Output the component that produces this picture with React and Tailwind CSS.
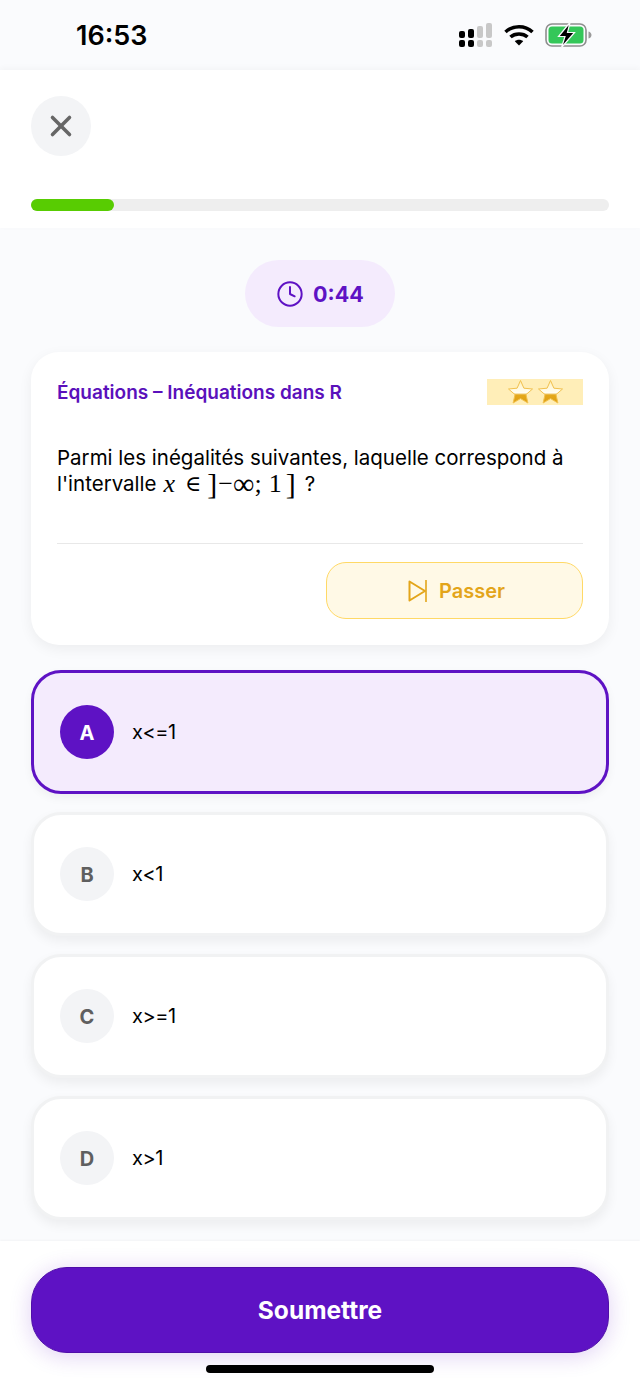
import { X, Clock } from 'lucide-react';

const options = [
  { letter: 'A', text: 'x<=1', selected: true },
  { letter: 'B', text: 'x<1' },
  { letter: 'C', text: 'x>=1' },
  { letter: 'D', text: 'x>1' },
];

function SignalIcon() {
  return (
    <svg width="34" height="24" viewBox="0 0 34 24">
      <rect x="0" y="8" width="6" height="7" rx="2" fill="#000" />
      <rect x="0" y="17" width="6" height="7" rx="2" fill="#000" />
      <rect x="9" y="6" width="6" height="9" rx="2" fill="#000" />
      <rect x="9" y="17" width="6" height="7" rx="2" fill="#000" />
      <rect x="18" y="3" width="6" height="12" rx="2" fill="#c8c8c8" />
      <rect x="18" y="17" width="6" height="7" rx="2" fill="#c8c8c8" />
      <rect x="27" y="0" width="6" height="15" rx="2" fill="#c8c8c8" />
      <rect x="27" y="17" width="6" height="7" rx="2" fill="#c8c8c8" />
    </svg>
  );
}

function WifiIcon() {
  return (
    <svg width="30" height="22" viewBox="0 0 30 22" fill="none" stroke="#000" strokeWidth="3.6">
      <path d="M1.5 8 C9 1 21 1 28.5 8" />
      <path d="M6.5 13 C11 9 19 9 23.5 13" />
      <path d="M15 21.5 L10.8 17.3 C13 15.3 17 15.3 19.2 17.3 Z" fill="#000" stroke="none" />
    </svg>
  );
}

function BatteryIcon() {
  return (
    <svg width="47" height="26" viewBox="0 0 47 26">
      <rect x="1" y="2" width="40" height="22" rx="6" fill="none" stroke="#8e8e8e" strokeWidth="1.6" />
      <rect x="3.5" y="4.5" width="35" height="17" rx="3.5" fill="#34c759" />
      <path d="M43.5 9.5 C45.5 10 46.5 11.5 46.5 13 C46.5 14.5 45.5 16 43.5 16.5 Z" fill="#9a9a9a" />
      <path d="M25 0.5 L13.5 14.5 H20 L16.5 25.5 L29.5 10.5 H22.5 Z" fill="#000" stroke="#f9fafc" strokeWidth="1.2" />
    </svg>
  );
}

function Star() {
  return (
    <svg width="27" height="26" viewBox="0 0 26 26">
      <defs>
        <linearGradient id="starFill" x1="0" y1="0" x2="0" y2="1">
          <stop offset="0" stopColor="#fff0b8" />
          <stop offset="0.55" stopColor="#fffef6" />
          <stop offset="0.64" stopColor="#e4a81c" />
          <stop offset="1" stopColor="#dd9f14" />
        </linearGradient>
      </defs>
      <path d="M13 1.5 L16.4 9.2 L25 10 L18.5 15.6 L20.4 24 L13 19.6 L5.6 24 L7.5 15.6 L1 10 L9.6 9.2 Z" fill="url(#starFill)" stroke="#f2c14e" strokeWidth="1" strokeLinejoin="round" />
    </svg>
  );
}

function SkipIcon() {
  return (
    <svg width="19" height="24" viewBox="0 0 19 24" fill="none" stroke="#e3a51a" strokeWidth="2" strokeLinejoin="round">
      <path d="M1.5 2.5 L17 12 L1.5 21.5 Z" />
      <path d="M18 1 V23" strokeWidth="1.6" />
    </svg>
  );
}

function Option({ letter, text, selected }) {
  return (
    <div
      className={`flex h-[124px] items-center gap-[18px] rounded-[30px] border-[3px] pl-[26px] ${
        selected
          ? 'border-[#5e12c4] bg-[#f4ebfd] shadow-[0_4px_10px_rgba(0,0,0,0.05)]'
          : 'border-[#f1f2f3] bg-white shadow-[0_5px_12px_rgba(0,0,0,0.06)]'
      }`}
    >
      <div
        className={`flex h-[54px] w-[54px] items-center justify-center rounded-full text-[20px] font-bold ${
          selected ? 'bg-[#5e12c4] text-white' : 'bg-[#f3f4f6] text-[#5f5f5f]'
        }`}
      >
        <span className="translate-y-px">{letter}</span>
      </div>
      <span className="text-[20px] tracking-[-0.5px] text-black">{text}</span>
    </div>
  );
}

export default function App() {
  return (
    <div className="relative flex h-[1385px] w-[640px] flex-col overflow-hidden bg-[#fafbfd] font-['Inter',sans-serif]">
      {/* Status bar */}
      <div className="flex h-[70px] items-center justify-between pl-[76px] pr-[48px]">
        <span className="translate-y-px text-[27px] font-semibold text-black">16:53</span>
        <div className="flex items-center gap-[11px]">
          <SignalIcon />
          <WifiIcon />
          <BatteryIcon />
        </div>
      </div>

      {/* Header */}
      <div className="h-[158px] bg-white px-[31px] pt-[26px] shadow-[0_-2px_6px_rgba(0,0,0,0.03)]">
        <button className="flex h-[60px] w-[60px] items-center justify-center rounded-full bg-[#f3f4f6]">
          <X size={34} strokeWidth={2.5} color="#666666" />
        </button>
        <div className="mt-[43px] h-[12px] rounded-full bg-[#eeeeee]">
          <div className="h-full w-[83px] rounded-full bg-[#58cc02]" />
        </div>
      </div>

      {/* Content */}
      <div className="flex flex-col px-[31px]">
        <div className="mx-auto mt-[32px] flex h-[67px] w-[150px] items-center justify-center gap-[9px] rounded-full bg-[#f4ebfd] text-[#5e12c4]">
          <Clock size={28} strokeWidth={1.7} />
          <span className="translate-y-px text-[21.5px] font-bold">0:44</span>
        </div>

        <div className="mt-[25px] h-[293px] rounded-[28px] bg-white px-[26px] pt-[27px] shadow-[0_4px_14px_rgba(0,0,0,0.06)]">
          <div className="flex items-start justify-between">
            <span className="translate-y-px text-[19px] leading-[26px] font-semibold text-[#5a10bb]">Équations – Inéquations dans R</span>
            <div className="flex h-[26px] w-[96px] items-center justify-center gap-[3px] bg-[#ffeeb8]">
              <Star />
              <Star />
            </div>
          </div>

          <div className="mt-[40px] text-[20.5px] leading-[26px] text-black">
            <p className="h-[26px]">Parmi les inégalités suivantes, laquelle correspond à</p>
            <p className="flex h-[26px] items-center">
              <span>l'intervalle</span>
              <span className="ml-[7px] flex items-center font-['Liberation_Serif',serif] text-[26px]">
                <i>x</i>
                <span className="ml-[10px] mr-[6px] font-['DejaVu_Serif',serif] text-[22px]">∈</span>
                <span className="text-[30px] font-light">]</span>
                <span className="ml-[1px]">−</span>
                <span className="text-[30px]">∞</span>
                <span>;</span>
                <span className="ml-[7px]">1</span>
                <span className="ml-[4px] text-[30px] font-light">]</span>
              </span>
              <span className="ml-[9px]">?</span>
            </p>
          </div>

          <div className="mt-[46px] h-px bg-[#e8e8e8]" />

          <div className="mt-[18px] flex justify-end">
            <button className="flex h-[57px] w-[257px] items-center justify-center gap-[12px] rounded-[20px] border border-[#ffd966] bg-[#fff9e6] pl-[4px]">
              <SkipIcon />
              <span className="text-[20px] font-semibold text-[#e3a51a]">Passer</span>
            </button>
          </div>
        </div>

        <div className="mt-[25px] flex flex-col gap-[18px]">
          {options.map((o) => (
            <Option key={o.letter} {...o} />
          ))}
        </div>
      </div>

      {/* Footer */}
      <div className="mt-auto h-[144px] bg-white px-[31px] pt-[26px] shadow-[0_-1px_2px_rgba(0,0,0,0.03)]">
        <button className="flex h-[86px] w-full items-center justify-center rounded-[36px] border border-[#4f0ea8] bg-[#5e12c4] text-[24.5px] font-bold text-white shadow-[0_3px_22px_rgba(94,18,196,0.2)]">
          Soumettre
        </button>
      </div>

      {/* Home indicator */}
      <div className="absolute bottom-[12px] left-[206px] h-[8px] w-[228px] rounded-full bg-black" />
    </div>
  );
}
